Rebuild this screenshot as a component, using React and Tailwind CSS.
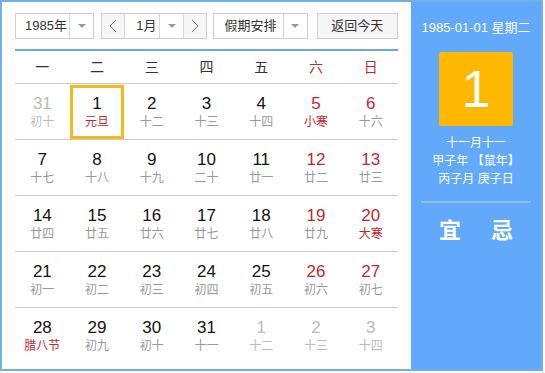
import React from "react";

const weekdays = ["一", "二", "三", "四", "五", "六", "日"];

// 1985年1月，周一开头
const weeks = [
  [
    { d: 31, l: "初十", other: true },
    { d: 1, l: "元旦", fest: true, sel: true },
    { d: 2, l: "十二" },
    { d: 3, l: "十三" },
    { d: 4, l: "十四" },
    { d: 5, l: "小寒", fest: true },
    { d: 6, l: "十六" },
  ],
  [
    { d: 7, l: "十七" },
    { d: 8, l: "十八" },
    { d: 9, l: "十九" },
    { d: 10, l: "二十" },
    { d: 11, l: "廿一" },
    { d: 12, l: "廿二" },
    { d: 13, l: "廿三" },
  ],
  [
    { d: 14, l: "廿四" },
    { d: 15, l: "廿五" },
    { d: 16, l: "廿六" },
    { d: 17, l: "廿七" },
    { d: 18, l: "廿八" },
    { d: 19, l: "廿九" },
    { d: 20, l: "大寒", fest: true },
  ],
  [
    { d: 21, l: "初一" },
    { d: 22, l: "初二" },
    { d: 23, l: "初三" },
    { d: 24, l: "初四" },
    { d: 25, l: "初五" },
    { d: 26, l: "初六" },
    { d: 27, l: "初七" },
  ],
  [
    { d: 28, l: "腊八节", fest: true },
    { d: 29, l: "初九" },
    { d: 30, l: "初十" },
    { d: 31, l: "十一" },
    { d: 1, l: "十二", other: true },
    { d: 2, l: "十三", other: true },
    { d: 3, l: "十四", other: true },
  ],
];

const Arrow = () => (
  <span className="flex h-full w-[24px] items-center justify-center border-l border-[#d8d8d8]">
    <span className="h-0 w-0 border-x-[4px] border-t-[4px] border-x-transparent border-t-[#999]" />
  </span>
);

const Chevron = ({ left }) => (
  <svg width="8" height="14" viewBox="0 0 8 14" fill="none">
    <polyline
      points={left ? "7,1 1,7 7,13" : "1,1 7,7 1,13"}
      stroke="#777"
      strokeWidth="1"
    />
  </svg>
);

const DayCell = ({ cell, col }) => {
  const weekend = col >= 5;
  let numColor = weekend ? "text-[#c2282f]" : "text-[#111]";
  let lunarColor = cell.fest ? "text-[#c2282f]" : "text-[#999]";
  if (cell.other) {
    numColor = "text-[#bbb]";
    lunarColor = "text-[#bbb]";
  }
  return (
    <div
      className={`flex h-[54px] flex-col items-center justify-center ${
        cell.sel ? "border-[3px] border-[#f6b91c]" : "border-[3px] border-transparent"
      }`}
    >
      <span className={`text-[17px] leading-[20px] ${numColor}`}>{cell.d}</span>
      <span className={`text-[12px] leading-[16px] ${lunarColor}`}>{cell.l}</span>
    </div>
  );
};

export default function App() {
  return (
    <div
      className="flex h-[371px] w-[543px] border-2 border-[#74aee4] bg-white"
      style={{ fontFamily: '"Liberation Sans", Arial, "Noto Sans CJK SC", sans-serif' }}
    >
      {/* 左侧日历 */}
      <div className="w-[409px] px-[13px] pt-[11px]">
        <div className="flex h-[26px] items-stretch text-[13px] text-[#333]">
          <div className="flex w-[80px] items-center border border-[#cfcfcf]">
            <span className="flex-1 pl-[9px]">1985年</span>
            <Arrow />
          </div>
          <div className="ml-[7px] flex w-[107px] items-center border border-[#cfcfcf]">
            <span className="flex h-full w-[23px] items-center justify-center border-r border-[#d8d8d8] bg-[#f6f6f6]">
              <Chevron left />
            </span>
            <span className="flex-1 pl-[11px]">1月</span>
            <Arrow />
            <span className="flex h-full w-[23px] items-center justify-center border-l border-[#d8d8d8] bg-[#f6f6f6]">
              <Chevron />
            </span>
          </div>
          <div className="ml-[6px] flex w-[95px] items-center border border-[#cfcfcf]">
            <span className="flex-1 pl-[10px]">假期安排</span>
            <Arrow />
          </div>
          <div className="ml-[9px] flex w-[82px] items-center justify-center border border-[#cfcfcf] bg-[#f6f6f6]">
            返回今天
          </div>
        </div>

        <div className="mt-[10px] border-t-2 border-[#6aa7dc]" />

        <div className="grid grid-cols-7 border-b border-[#ccc]">
          {weekdays.map((w, i) => (
            <div
              key={w}
              className={`flex h-[32px] items-center justify-center text-[14px] ${
                i >= 5 ? "text-[#c2282f]" : "text-[#333]"
              }`}
            >
              {w}
            </div>
          ))}
        </div>

        {weeks.map((week, r) => (
          <div
            key={r}
            className={`grid grid-cols-7 pt-px ${r < weeks.length - 1 ? "border-b border-[#ccc]" : ""}`}
          >
            {week.map((cell, c) => (
              <DayCell key={c} cell={cell} col={c} />
            ))}
          </div>
        ))}
      </div>

      {/* 右侧详情 */}
      <div className="flex flex-1 flex-col items-center bg-[#62a8fb] text-white">
        <div className="mt-[17px] text-[13px] leading-[18px]">1985-01-01 星期二</div>
        <div className="mt-[15px] flex h-[74px] w-[74px] items-center justify-center rounded-[2px] bg-[#ffb800] text-[52px] leading-none">
          1
        </div>
        <div className="mt-[8px] flex flex-col items-center text-[12px] leading-[18px]">
          <span>十一月十一</span>
          <span>甲子年 【鼠年】</span>
          <span>丙子月 庚子日</span>
        </div>
        <div className="mt-[13px] h-[2px] w-[110px] bg-[#8cc0fb]" />
        <div className="mt-[11px] flex gap-[30px] text-[22px] font-semibold">
          <span>宜</span>
          <span>忌</span>
        </div>
      </div>
    </div>
  );
}
